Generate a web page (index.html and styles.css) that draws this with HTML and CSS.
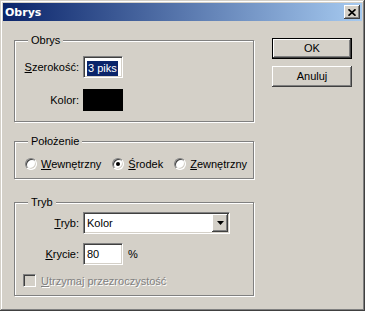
FILE: index.html
```html
<!DOCTYPE html>
<html>
<head lang="pl">
    <meta charset="UTF-8">
    <title>Obrys</title>
    <link rel="stylesheet" href="styles.css">
</head>
<body>
    <div id="window">
        <div id="titlebar">
            <span class="title">Obrys</span>
            <span class="close">
                <svg width="8" height="7" viewBox="0 0 8 7"><path d="M0.5 0.3 L7.5 6.7 M7.5 0.3 L0.5 6.7" stroke="#000" stroke-width="1.7" fill="none"/></svg>
            </span>
        </div>
        <div id="main">
            <div id="groups">
                <div class="group group-stroke">
                    <span class="group-title">Obrys</span>
                    <div class="form">
                        <label class="label"><u>S</u>zerokość:</label>
                        <div class="field"><span class="sel">3 piks</span></div>
                        <label class="label">Kolor:</label>
                        <div class="swatch"></div>
                    </div>
                </div>
                <div class="group group-place">
                    <span class="group-title">Położenie</span>
                    <div class="radios">
                        <div class="radio-opt"><span class="radio"></span><span><u>W</u>ewnętrzny</span></div>
                        <div class="radio-opt"><span class="radio checked"></span><span><u>Ś</u>rodek</span></div>
                        <div class="radio-opt"><span class="radio"></span><span><u>Z</u>ewnętrzny</span></div>
                    </div>
                </div>
                <div class="group group-mode">
                    <span class="group-title">Tryb</span>
                    <div class="form">
                        <label class="label"><u>T</u>ryb:</label>
                        <div class="select">
                            <span class="select-text">Kolor</span>
                            <span class="drop">
                                <svg width="7" height="4" viewBox="0 0 7 4"><polygon points="0,0 7,0 3.5,4" fill="#000"/></svg>
                            </span>
                        </div>
                        <label class="label"><u>K</u>rycie:</label>
                        <div class="field-row"><div class="field">80</div><span class="unit">%</span></div>
                    </div>
                    <div class="check-row">
                        <span class="checkbox"></span>
                        <span class="disabled"><u>U</u>trzymaj przezroczystość</span>
                    </div>
                </div>
            </div>
            <div id="buttons">
                <div class="btn btn-default">OK</div>
                <div class="btn">Anuluj</div>
            </div>
        </div>
    </div>
</body>
</html>
```

FILE: styles.css
```css
*{
    padding: 0;
    margin: 0;
    box-sizing: border-box;
}
body{
    background: #d4d0c8;
    font: 11px "Liberation Sans", Arial, sans-serif;
    color: #000;
}
#window{
    width: 365px;
    height: 311px;
    padding: 3px;
    background: #d4d0c8;
    box-shadow: inset -1px -1px 0 #404040, inset 1px 1px 0 #d4d0c8, inset -2px -2px 0 #808080, inset 2px 2px 0 #fff;
}
#titlebar{
    height: 18px;
    display: flex;
    align-items: center;
    justify-content: space-between;
    padding: 0 2px 0 2px;
    background: linear-gradient(to right, #0a246a, #a6caf0);
}
#titlebar .title{
    color: #fff;
    font: bold 11px "DejaVu Sans", Verdana, sans-serif;
}
#titlebar .close{
    width: 16px;
    height: 14px;
    display: flex;
    align-items: center;
    justify-content: center;
    background: #d4d0c8;
    box-shadow: inset -1px -1px 0 #404040, inset 1px 1px 0 #fff, inset -2px -2px 0 #808080;
}
#main{
    display: flex;
    gap: 18px;
    padding: 17px 10px 0 11px;
}
#groups{
    width: 240px;
    margin-top: 2px;
}
.group{
    position: relative;
    border: 1px solid #808080;
    box-shadow: inset 1px 1px 0 #fff, 1px 1px 0 #fff;
}
.group-title{
    position: absolute;
    top: -7px;
    left: 13px;
    padding: 0 3px;
    line-height: 13px;
    background: #d4d0c8;
}
.group-place{
    margin-top: 19px;
}
.group-mode{
    margin-top: 23px;
}
.form{
    display: grid;
    grid-template-columns: 64px auto;
    column-gap: 4px;
    align-items: center;
    justify-items: start;
}
.form .label{
    justify-self: end;
}
.group-stroke .form{
    row-gap: 11px;
    padding: 15px 0 10px 0;
}
.group-mode .form{
    row-gap: 9px;
    padding-top: 9px;
}
.field{
    width: 40px;
    height: 22px;
    padding: 0 3px;
    line-height: 20px;
    background: #fff;
    border: 1px solid;
    border-color: #808080 #fff #fff #808080;
    box-shadow: inset 1px 1px 0 #404040, inset -1px -1px 0 #d4d0c8;
}
.sel{
    display: inline-block;
    line-height: 15px;
    padding: 0 1px;
    background: #0a246a;
    color: #fff;
    vertical-align: middle;
}
.swatch{
    width: 40px;
    height: 22px;
    background: #000;
}
.radios{
    display: flex;
    gap: 11px;
    padding: 15px 0 8px 10px;
}
.radio-opt{
    display: flex;
    align-items: center;
    gap: 4px;
    height: 13px;
}
.radio{
    width: 12px;
    height: 12px;
    border-radius: 50%;
    background: #fff;
    border: 1px solid;
    border-color: #808080 #fff #fff #808080;
    box-shadow: inset 1px 1px 0 #404040, inset -1px -1px 0 #d4d0c8;
    display: flex;
    align-items: center;
    justify-content: center;
}
.radio.checked::after{
    content: "";
    width: 4px;
    height: 4px;
    border-radius: 50%;
    background: #000;
}
.select{
    width: 147px;
    height: 22px;
    display: flex;
    align-items: center;
    justify-content: space-between;
    padding: 0 1px 0 3px;
    background: #fff;
    border: 1px solid;
    border-color: #808080 #fff #fff #808080;
    box-shadow: inset 1px 1px 0 #404040, inset -1px -1px 0 #d4d0c8;
}
.drop{
    width: 16px;
    height: 18px;
    display: flex;
    align-items: center;
    justify-content: center;
    background: #d4d0c8;
    box-shadow: inset -1px -1px 0 #404040, inset 1px 1px 0 #fff, inset -2px -2px 0 #808080;
}
.field-row{
    display: flex;
    align-items: center;
    gap: 5px;
}
.check-row{
    display: flex;
    align-items: center;
    gap: 5px;
    height: 13px;
    margin-top: 9px;
    margin-bottom: 8px;
    padding-left: 8px;
}
.checkbox{
    width: 13px;
    height: 13px;
    background: #d4d0c8;
    border: 1px solid;
    border-color: #808080 #fff #fff #808080;
    box-shadow: inset 1px 1px 0 #404040, inset -1px -1px 0 #d4d0c8;
}
.disabled{
    color: #808080;
    text-shadow: 1px 1px 0 #fff;
}
#buttons{
    display: flex;
    flex-direction: column;
    gap: 7px;
}
.btn{
    width: 80px;
    height: 21px;
    line-height: 21px;
    text-align: center;
    box-shadow: inset -1px -1px 0 #404040, inset 1px 1px 0 #fff, inset -2px -2px 0 #808080;
}
.btn-default{
    line-height: 19px;
    border: 1px solid #000;
}
```
